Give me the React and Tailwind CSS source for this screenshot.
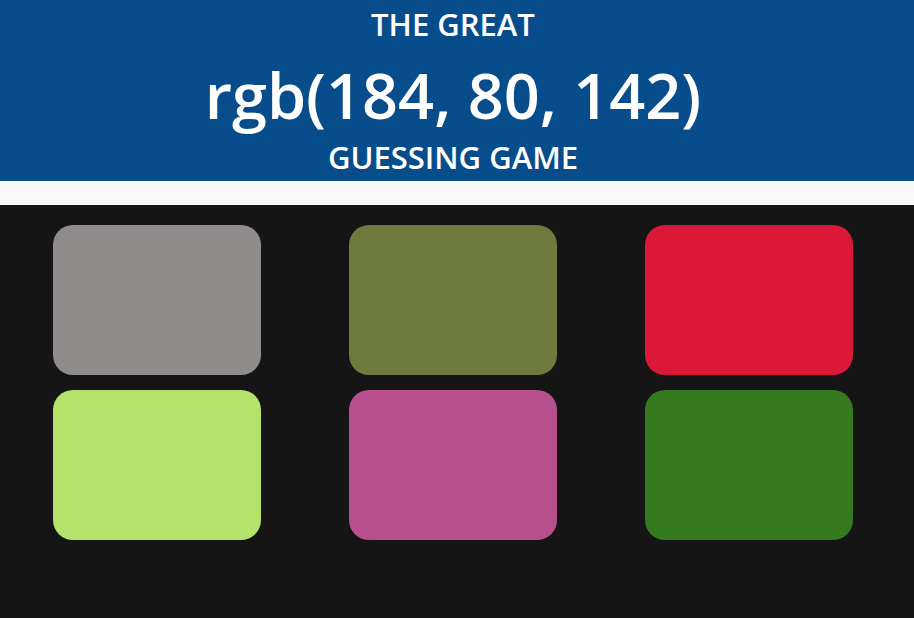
const squares = ['#918c8c', '#6f7a3e', '#dc1838', '#b5e26a', '#b8508e', '#357a1e']

export default function App() {
  return (
    <div className="min-h-[618px] bg-[#151515] font-['Open_Sans',sans-serif]">
      <h1 className="bg-[#074c8b] text-white text-center pt-[4px] pr-[8px] h-[181px] font-semibold">
        <div className="text-[31px] leading-[40px]">THE GREAT</div>
        <div className="text-[63px] leading-[80px] mt-[11px]">rgb(184, 80, 142)</div>
        <div className="text-[31px] leading-[40px] mt-[2px]">GUESSING GAME</div>
      </h1>
      <div className="h-[24px] bg-[#f7f8fa]" />
      <div className="w-[800px] ml-[53px] pt-[20px] grid grid-cols-3 gap-x-[88px] gap-y-[15px]">
        {squares.map((c) => (
          <div key={c} className="h-[150px] rounded-[20px]" style={{ background: c }} />
        ))}
      </div>
    </div>
  )
}
